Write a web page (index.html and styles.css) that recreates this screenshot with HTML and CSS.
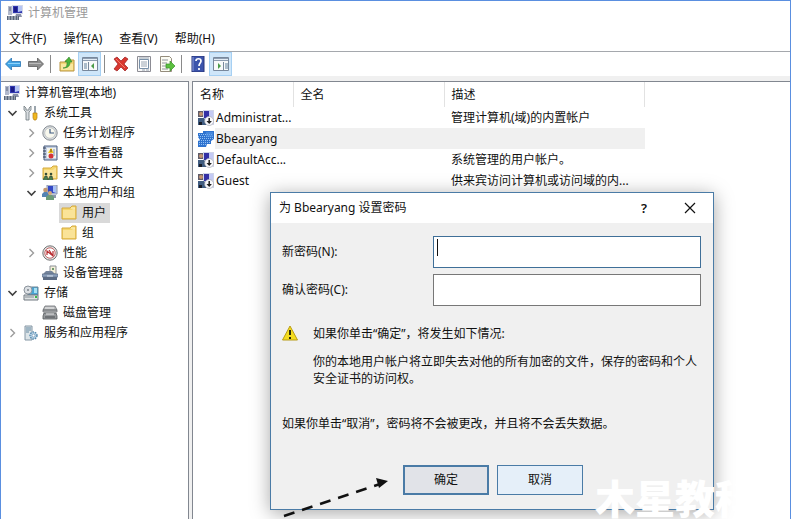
FILE: index.html
```html
<!DOCTYPE html>
<html lang="zh-CN">
<head>
<meta charset="utf-8">
<title>计算机管理</title>
<link rel="stylesheet" href="styles.css">
</head>
<body>
<svg class="defs" aria-hidden="true">
  <symbol id="computer" viewBox="0 0 16 16">
    <path d="M5 0h11v9H5z" fill="#d4d8e8"/><path d="M6 1h9v7H6z" fill="#3038b0"/><path d="M11 1h4v5l-4 1z" fill="#b4c4f4"/><path d="M7 2h3v5H7z" fill="#1c1c88"/>
    <path d="M1 1h4v9H1z" fill="#b0b8cc"/><path d="M2 3h2M2 5h2" stroke="#5c647c"/><path d="M9 9h5l1 3H8z" fill="#8890a8"/>
    <path d="M0 11h12v4H0z" fill="#586478"/><path d="M1 12h10M1 14h10" stroke="#ccd4dc" stroke-dasharray="2 1"/>
  </symbol>
  <symbol id="tools" viewBox="0 0 16 16">
    <path d="M1 1v4l2 2v8h3V7l2-2V1L6 3v2H3V3z" fill="#d8dce0" stroke="#70787e" stroke-width=".8"/>
    <path d="M11 1h2v7h-2z" fill="#9aa4ac"/><path d="M10 8h4v5l-1 2h-2l-1-2z" fill="#f0b820" stroke="#b88010" stroke-width=".7"/>
  </symbol>
  <symbol id="clock" viewBox="0 0 16 16">
    <circle cx="8" cy="8" r="7.2" fill="#d9dde0" stroke="#888e94"/><circle cx="8" cy="8" r="5.3" fill="#f8f8ee" stroke="#b4b8bc" stroke-width=".7"/><path d="M8 4v4h4" fill="none" stroke="#3c5880" stroke-width="1.2"/>
  </symbol>
  <symbol id="event" viewBox="0 0 16 16">
    <path d="M2 1h13v14H2z" fill="#c4d0e4" stroke="#4c6080"/><path d="M5 3h9v10H5z" fill="#f4f4ec"/><path d="M1 3h3M1 6h3M1 9h3M1 12h3" stroke="#303c54"/><path d="M9 3l3 5H6z" fill="#f4c820"/><path d="M9 4v3" stroke="#704800"/><circle cx="9" cy="11" r="2.5" fill="#d43438"/><path d="M12 4v7" stroke="#7890b8"/>
  </symbol>
  <symbol id="folder" viewBox="0 0 16 16">
    <path d="M1 3h8l2-2h4v13H1z" fill="#f5d66c" stroke="#d4a83c"/><path d="M2 5h9l2-2h1v10H2z" fill="#fae398"/><path d="M10 3h4" stroke="#fff4c4"/>
  </symbol>
  <symbol id="shared" viewBox="0 0 16 16">
    <path d="M1 3h8l2-2h4v13H1z" fill="#f5d66c" stroke="#d4a83c"/><path d="M2 5h9l2-2h1v10H2z" fill="#fae398"/><circle cx="4" cy="9" r="1.300" fill="#344c38"/><circle cx="9" cy="9" r="1.300" fill="#344c38"/><path d="M1 15l2-4h2l1 4M6 15l2-4h2l1 4" fill="#487c50" stroke="#283c34" stroke-width=".6"/>
  </symbol>
  <symbol id="group" viewBox="0 0 16 16">
    <path d="M5 0h10v9H5z" fill="#c8d0e4" stroke="#8492b0"/><path d="M6 1h8v7H6z" fill="#3448c4"/><path d="M11 1h3v7l-3-1z" fill="#a8c0f4"/><path d="M8 10h6v3H8z" fill="#8c96ac"/>
    <circle cx="3.5" cy="5" r="2.3" fill="#c49870"/><path d="M0 12V9l2-2h3l2 2v3z" fill="#5484b4"/><circle cx="8" cy="8" r="2" fill="#d4a878"/><path d="M4 15v-3l2-2h4l2 2v3z" fill="#6c9c78"/>
  </symbol>
  <symbol id="perf" viewBox="0 0 16 16">
    <circle cx="8" cy="8" r="7.2" fill="#e4e4e4" stroke="#747474"/><circle cx="8" cy="8" r="5.2" fill="#fff" stroke="#b44444" stroke-width=".8"/><path d="M5 10V6l6 5V6M7 5l4 6" fill="none" stroke="#b82c30" stroke-width="1.2"/>
  </symbol>
  <symbol id="device" viewBox="0 0 16 16">
    <path d="M8 1h6v8H8z" fill="#f4f0d8" stroke="#8c9098"/><path d="M10 3h2v2h-2z" fill="#70986c"/><path d="M1 9l3-3h6l3 3z" fill="#74849c"/><path d="M0 9h16v3H0z" fill="#8ca0bc" stroke="#54647c" stroke-width=".6"/><path d="M1 12h14v3H1z" fill="#5c6c84"/><path d="M5 11h6" stroke="#dce4f0"/>
  </symbol>
  <symbol id="storage" viewBox="0 0 16 16">
    <path d="M5 2h10v8H5z" fill="#48a4d4" stroke="#6c8494"/><path d="M11 3h3v5h-3z" fill="#a4e0f4"/><circle cx="5" cy="5" r="4" fill="#dce0e4" stroke="#8c949c"/><circle cx="5" cy="5" r="1" fill="#7c848c"/><path d="M1 10h14v5H1z" fill="#e0e4e4" stroke="#707880"/><path d="M2 12h9" stroke="#848c94"/><path d="M12 12h2" stroke="#38b848" stroke-width="2"/>
  </symbol>
  <symbol id="disk" viewBox="0 0 16 16">
    <path d="M3 1h10l2 4v2H1V5z" fill="#b8babc" stroke="#6c7074" stroke-width=".8"/><path d="M1 5h14" stroke="#5c6064"/><path d="M3 3h9" stroke="#ececec"/><path d="M2 8h12l1 3v3H1v-3z" fill="#96999c" stroke="#54585c" stroke-width=".8"/><path d="M4 9h8" stroke="#e8e8e8"/><path d="M3 12h10" stroke="#484c50"/>
  </symbol>
  <symbol id="services" viewBox="0 0 16 16">
    <path d="M2 1h7v14H2z" fill="#dce4e8" stroke="#8496a4"/><path d="M3 3h5M3 5h5M3 7h3" stroke="#6488a0"/><circle cx="10.500" cy="10.500" r="3.500" fill="#b8d4e8" stroke="#5488ac" stroke-width="1.400" stroke-dasharray="1.500 1"/><circle cx="10.500" cy="10.500" r="1.500" fill="#fff" stroke="#6890b0" stroke-width=".7"/>
  </symbol>
  <symbol id="user-down" viewBox="0 0 16 16">
    <path d="M5 0h11v15H5z" fill="#cfd4e8"/><path d="M6 1h5v7H6z" fill="#3430a4"/><path d="M11 1h4v6h-4z" fill="#c4caf4"/><path d="M0 1h5v6H0z" fill="#605c68"/><circle cx="3" cy="4" r="2" fill="#c49470"/><path d="M0 8h6l2 3v4H0z" fill="#405c80"/><path d="M1 12h3v3H1z" fill="#181c28"/><circle cx="11.200" cy="11" r="4.500" fill="#f8f8fc" stroke="#a8acb4" stroke-width=".7"/><path d="M11.200 8v4" stroke="#202020" stroke-width="1.500"/><path d="M8.500 11h5.400l-2.700 3z" fill="#202020"/>
  </symbol>
  <symbol id="user-selected" viewBox="0 0 16 16">
    <path d="M5 0h11v8l-3 2v3H9l-1 3H0v-6l2-1-2-3V2h5z" fill="#2f73cf"/><path d="M1 3.500h14M0 5.500h15M2 7.500h13M1 9.500h12M1 11.500h11M1 13.500h7" stroke="#91c0f4" stroke-dasharray="1 1"/><path d="M8 1h7v5H8z" fill="#5796e4" opacity=".6"/>
  </symbol>
  <symbol id="open" viewBox="0 0 10 10"><path d="M1 3l4 4 4-4" fill="none" stroke="#404040" stroke-width="1.600"/></symbol>
  <symbol id="closed" viewBox="0 0 10 10"><path d="M3 1l4 4-4 4" fill="none" stroke="#9c9c9c" stroke-width="1.400"/></symbol>
</svg>

<div class="window">
  <header class="titlebar"><svg class="icon"><use href="#computer"/></svg><h1>计算机管理</h1></header>
  <nav class="menu"><button>文件(F)</button><button>操作(A)</button><button>查看(V)</button><button>帮助(H)</button></nav>
  <div class="toolbar">
    <button class="tool" aria-label="后退"><svg viewBox="0 0 16 16"><path d="M.5 8l6-6v3.500h9v5h-9V14z" fill="#42a4e4" stroke="#2874b4" stroke-width=".8"/><path d="M3 7.500h12" stroke="#90d4fc"/></svg></button>
    <button class="tool" aria-label="前进"><svg viewBox="0 0 16 16"><path d="M15.500 8l-6-6v3.500h-9v5h9V14z" fill="#8e8e8e" stroke="#5c5c5c" stroke-width=".8"/><path d="M1 7.500h12" stroke="#bcbcbc"/></svg></button>
    <span class="divider"></span>
    <button class="tool" aria-label="向上"><svg viewBox="0 0 16 16"><path d="M1 6h5l1-2h8v11H1z" fill="#f4d878" stroke="#b89440"/><path d="M2 8h12v6H2z" fill="#fae8a0"/><path d="M4 12c4 0 4-3 4-6H6l4-5 3 5h-2c0 4-2 6-7 6z" fill="#4cb43c" stroke="#2c8428" stroke-width=".6"/></svg></button>
    <button class="tool on" aria-label="显示控制台树"><svg viewBox="0 0 16 16"><path d="M.5 1.500h15v13H.5z" fill="#f8f9fa" stroke="#78889c"/><path d="M1 2h14v3H1z" fill="#8c9cb0"/><path d="M1 3.500h14" stroke="#e4ecf4"/><path d="M6.500 6v8" stroke="#78889c"/><path d="M2 8h3M2 10h3M2 12h3" stroke="#60809c"/><path d="M12 7v6L9 10z" fill="#4c9c48"/></svg></button>
    <span class="divider"></span>
    <button class="tool" aria-label="删除"><svg viewBox="0 0 16 16"><path d="M1 3l3-2 4 4 4-4 3 2-4 5 4 4-3 3-4-4-4 4-3-2 4-5z" fill="#d83830" stroke="#9c1c1c" stroke-width=".7"/><path d="M3 3l9 9" stroke="#f47c68"/></svg></button>
    <button class="tool" aria-label="属性"><svg viewBox="0 0 16 16"><path d="M1.500.5h13v15h-13z" fill="#f8f8f8" stroke="#8c8c94"/><path d="M3.500 3.500h9v9h-9z" fill="#fff" stroke="#7890a8"/><path d="M3 2h10M5 6h6M5 8h6M5 10h6M6 14h3M10 14h3" stroke="#98a4b0"/></svg></button>
    <button class="tool" aria-label="导出列表"><svg viewBox="0 0 16 16"><path d="M1.500.5h9l2 2v13h-11z" fill="#fcfcf4" stroke="#948c7c"/><path d="M3 4h6M3 7h5M3 10h5M3 13h6" stroke="#90949c"/><path d="M7 8h4V5l5 5-5 5v-3H7z" fill="#5cc040" stroke="#389428" stroke-width=".7"/></svg></button>
    <span class="divider"></span>
    <button class="tool" aria-label="帮助"><svg viewBox="0 0 16 16"><path d="M2 0h12v16H2z" fill="#3c54ac" stroke="#283478"/><path d="M3 1v14" stroke="#8c9cdc"/><path d="M6 5c0-3 5-3 5 0 0 2-2 2-2 5M9 12v2" fill="none" stroke="#fff" stroke-width="1.700"/></svg></button>
    <button class="tool on" aria-label="显示操作窗格"><svg viewBox="0 0 16 16"><path d="M.5 1.500h15v13H.5z" fill="#f8f9fa" stroke="#78889c"/><path d="M1 2h14v3H1z" fill="#8c9cb0"/><path d="M1 3.500h14" stroke="#e4ecf4"/><path d="M10.500 6v8" stroke="#78889c"/><path d="M12 8h3M12 10h3M12 12h3" stroke="#60809c"/><path d="M5 7v6l3-3z" fill="#4c9c48"/></svg></button>
  </div>

  <main class="panes">
    <ul class="tree">
      <li class="node root"><svg class="icon"><use href="#computer"/></svg><span>计算机管理(本地)</span></li>
      <li class="node"><svg class="chevron"><use href="#open"/></svg><svg class="icon"><use href="#tools"/></svg><span>系统工具</span></li>
      <li class="node l2"><svg class="chevron"><use href="#closed"/></svg><svg class="icon"><use href="#clock"/></svg><span>任务计划程序</span></li>
      <li class="node l2"><svg class="chevron"><use href="#closed"/></svg><svg class="icon"><use href="#event"/></svg><span>事件查看器</span></li>
      <li class="node l2"><svg class="chevron"><use href="#closed"/></svg><svg class="icon"><use href="#shared"/></svg><span>共享文件夹</span></li>
      <li class="node l2"><svg class="chevron"><use href="#open"/></svg><svg class="icon"><use href="#group"/></svg><span>本地用户和组</span></li>
      <li class="node l3"><span class="current"><svg class="icon"><use href="#folder"/></svg><span>用户</span></span></li>
      <li class="node l3"><span class="leaf"><svg class="icon"><use href="#folder"/></svg><span>组</span></span></li>
      <li class="node l2"><svg class="chevron"><use href="#closed"/></svg><svg class="icon"><use href="#perf"/></svg><span>性能</span></li>
      <li class="node l2"><svg class="chevron"></svg><svg class="icon"><use href="#device"/></svg><span>设备管理器</span></li>
      <li class="node"><svg class="chevron"><use href="#open"/></svg><svg class="icon"><use href="#storage"/></svg><span>存储</span></li>
      <li class="node l2"><svg class="chevron"></svg><svg class="icon"><use href="#disk"/></svg><span>磁盘管理</span></li>
      <li class="node"><svg class="chevron"><use href="#closed"/></svg><svg class="icon"><use href="#services"/></svg><span>服务和应用程序</span></li>
    </ul>
    <section class="list">
      <table class="users">
        <colgroup><col class="c-name"><col class="c-full"><col class="c-desc"></colgroup>
        <thead><tr><th>名称</th><th>全名</th><th>描述</th></tr></thead>
        <tbody>
          <tr><td><span class="user"><svg class="icon"><use href="#user-down"/></svg>Administrat...</span></td><td></td><td>管理计算机(域)的内置帐户</td></tr>
          <tr class="selected"><td><span class="user"><svg class="icon"><use href="#user-selected"/></svg>Bbearyang</span></td><td></td><td></td></tr>
          <tr><td><span class="user"><svg class="icon"><use href="#user-down"/></svg>DefaultAcc...</span></td><td></td><td>系统管理的用户帐户。</td></tr>
          <tr><td><span class="user"><svg class="icon"><use href="#user-down"/></svg>Guest</span></td><td></td><td>供来宾访问计算机或访问域的内...</td></tr>
        </tbody>
      </table>
    </section>
  </main>

  <form class="dialog" role="dialog" aria-labelledby="dialog-title">
    <div class="dialog-head">
      <h2 id="dialog-title">为 Bbearyang 设置密码</h2>
      <button type="button" class="caption help">?</button>
      <button type="button" class="caption" aria-label="关闭"><svg viewBox="0 0 12 12"><path d="M1 1l10 10M11 1L1 11" stroke="#111" stroke-width="1.200"/></svg></button>
    </div>
    <div class="dialog-body">
      <div class="field"><label for="new-pw">新密码(N):</label><input id="new-pw" class="focused" type="password"></div>
      <div class="field"><label for="confirm-pw">确认密码(C):</label><input id="confirm-pw" type="password"></div>
      <div class="warning">
        <svg class="icon" viewBox="0 0 16 16"><path d="M8 1l7.500 14H.5z" fill="#f4dc20" stroke="#b89c18" stroke-linejoin="round"/><path d="M8 5v5M8 12v2" stroke="#181808" stroke-width="1.800"/></svg>
        <div><p>如果你单击“确定”，将发生如下情况:</p><p>你的本地用户帐户将立即失去对他的所有加密的文件，保存的密码和个人安全证书的访问权。</p></div>
      </div>
      <p class="note">如果你单击“取消”，密码将不会被更改，并且将不会丢失数据。</p>
      <div class="actions"><button type="button" class="primary">确定</button><button type="button">取消</button></div>
    </div>
  </form>
  <svg class="pointer" viewBox="0 0 108 43" aria-hidden="true"><path d="M2 40L98 8" stroke="#111" stroke-width="2.500" stroke-dasharray="11 8"/><path d="M106 5L97 12 94 2z" fill="#111"/></svg>
  <div class="watermark">木星教科</div>
</div>
</body>
</html>
```
FILE: styles.css
```css
* { box-sizing: border-box; }
body { margin: 0; font: 12px/16px "Noto Sans", "Noto Sans CJK SC", sans-serif; color: #111; }
h1, h2, p, ul { margin: 0; padding: 0; font-size: 12px; font-weight: 400; }
button { margin: 0; padding: 0; border: 0; background: none; font: inherit; color: inherit; }
.defs { position: absolute; width: 0; height: 0; }
.window { position: relative; display: flex; flex-direction: column; height: 100vh; overflow: hidden; border: 1px solid #5a8fe0; border-bottom: 0; background: #fff; }
.icon { width: 16px; height: 16px; flex: none; }

.titlebar { display: flex; align-items: center; gap: 5px; height: 24px; padding-left: 6px; color: #999; }
.menu { display: flex; align-items: flex-end; gap: 17px; height: 26px; padding: 0 8px 2px; }
.menu button { height: 20px; }
.toolbar { display: flex; align-items: center; height: 25px; border-top: 1px solid #a5a8ad; }
.tool { display: grid; place-items: center; width: 23px; height: 24px; }
.tool svg { width: 16px; height: 16px; }
.tool.on { background: #cfe6f9; border: 1px solid #a6d0f3; }
.divider { width: 1px; height: 18px; margin: 0 4px 0 3px; background: #8a8a8a; }

.panes { flex: 1; display: grid; grid-template-columns: 188px 1fr; gap: 3px; padding-top: 5px; background: #f0f0f0; }
.tree { list-style: none; padding-top: 1px; background: #fff; border: solid #828790; border-width: 1px 1px 0 0; }
.node { display: flex; align-items: center; gap: 5px; height: 20px; padding-left: 6px; white-space: nowrap; }
.node.root { padding-left: 3px; }
.node.l2 { padding-left: 25px; }
.node.l3 { padding-left: 58px; }
.chevron { width: 11px; height: 10px; flex: none; }
.current, .leaf { display: flex; align-items: center; gap: 5px; height: 20px; padding: 0 4px 0 2px; }
.current { background: #d9d9d9; }

.list { background: #fff; border: solid #828790; border-width: 1px 0 0 1px; }
.users { width: 452px; table-layout: fixed; border-collapse: collapse; }
.c-name { width: 100px; }
.c-full { width: 151px; }
.users th, .users td { padding: 0 0 0 7px; text-align: left; font-weight: 400; white-space: nowrap; }
.users th { height: 25px; border-right: 1px solid #e2e2e2; }
.users td { height: 21px; }
.users td:first-child { padding-left: 5px; }
.selected td { background: #f0f0f0; }
.selected td:first-child { background: linear-gradient(90deg, #fff 22px, #f0f0f0 22px); }
.user { display: flex; align-items: center; gap: 2px; }

.dialog { position: absolute; left: 269px; top: 191px; width: 444px; border: 1px solid #4a7ba6; background: #f0f0f0; box-shadow: 0 3px 18px rgba(0, 0, 0, .35); }
.dialog-head { display: flex; align-items: center; height: 30px; padding-left: 8px; background: #fff; }
.dialog-head h2 { flex: 1; }
.caption { display: grid; place-items: center; width: 46px; height: 30px; }
.caption svg { width: 12px; height: 12px; }
.help { font-size: 13px; font-weight: 600; }
.dialog-body { padding: 13px 12px 14px 11px; }
.field { display: grid; grid-template-columns: 151px 1fr; align-items: center; margin-bottom: 6px; }
.field input { width: 100%; height: 32px; padding: 0 4px; border: 1px solid #777; border-radius: 0; outline: 0; background: #fff; font: inherit; }
.field .focused { border-color: #3f6f98; background: linear-gradient(#111, #111) 3px 2px / 1px 17px no-repeat #fff; }
.warning { display: flex; gap: 15px; margin-top: 19px; }
.warning p { line-height: 17px; }
.warning p + p { margin-top: 11px; }
.note { margin-top: 29px; }
.actions { display: flex; gap: 8px; margin-top: 33px; padding-left: 121px; }
.actions button { width: 86px; height: 30px; border: 1px solid #4a7ba6; background: #e5eff9; }
.actions .primary { border-width: 2px; background: #e1e3e8; }

.pointer { position: absolute; left: 281px; top: 475px; width: 108px; height: 43px; }
.watermark { position: absolute; left: 594px; top: 474px; font: 900 40px/44px "Noto Sans CJK SC", sans-serif; color: #fff; white-space: nowrap; }
```
